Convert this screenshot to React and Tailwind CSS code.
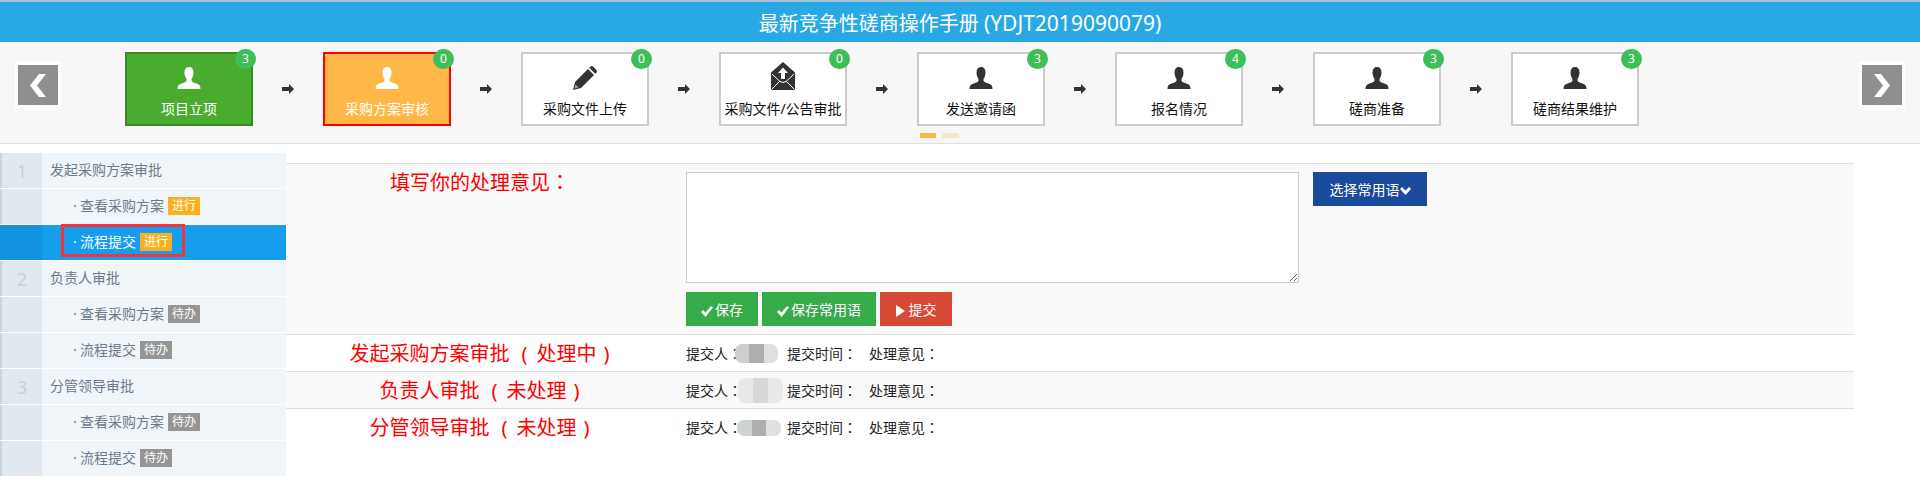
import React from "react";

const steps = [
  { name: "项目立项", count: 3, icon: "user", tone: "done" },
  { name: "采购方案审核", count: 0, icon: "user", tone: "active" },
  { name: "采购文件上传", count: 0, icon: "pencil" },
  { name: "采购文件/公告审批", count: 0, icon: "mail" },
  { name: "发送邀请函", count: 3, icon: "user" },
  { name: "报名情况", count: 4, icon: "user" },
  { name: "磋商准备", count: 3, icon: "user" },
  { name: "磋商结果维护", count: 3, icon: "user" },
];

const menu = [
  { no: 1, label: "发起采购方案审批" },
  { label: "查看采购方案", tag: "进行" },
  { label: "流程提交", tag: "进行", active: true },
  { no: 2, label: "负责人审批" },
  { label: "查看采购方案", tag: "待办" },
  { label: "流程提交", tag: "待办" },
  { no: 3, label: "分管领导审批" },
  { label: "查看采购方案", tag: "待办" },
  { label: "流程提交", tag: "待办" },
];

const records = [
  { title: "发起采购方案审批", status: "处理中", bg: "bg-white", blur: ["bg-[#ccd0d2]", "bg-[#b0aeac]", "bg-[#dfe0e4]"], size: "w-[43px] h-[19px] -ml-[7px] mr-[9px]" },
  { title: "负责人审批", status: "未处理", bg: "bg-[#f9f9f9]", blur: ["bg-[#e8e8e8]", "bg-[#d9d7d7]", "bg-[#e9e9eb]"], size: "w-[45px] h-[25px] -ml-[4px] mr-[4px]" },
  { title: "分管领导审批", status: "未处理", bg: "bg-white", blur: ["bg-[#ced2d3]", "bg-[#b0aeac]", "bg-[#dfe0e4]"], size: "w-[44px] h-[16px] -ml-[5px] mr-[6px]" },
];

const StepIcon = ({ type, className }) => {
  if (type === "pencil") {
    return (
      <svg width="24" height="24" viewBox="0 0 24 24" className={className}>
        <path fill="currentColor" d="M0 24 L2 16 L15 3 L21 9 L8 22 Z" />
        <path fill="#fff" d="M1.4 22.6 L2.5 18.5 L5.5 21.5 Z" opacity=".55" />
        <path fill="currentColor" d="M16.2 1.8 L17.6 .5 Q18.8 -.3 20 .6 L23.4 4 Q24.3 5.2 23.5 6.4 L22.2 7.8 Z" />
      </svg>
    );
  }
  if (type === "mail") {
    return (
      <svg width="24" height="28" viewBox="0 0 24 28" className={className}>
        <path fill="currentColor" d="M12 0 L24 10.5 V28 H0 V10.5 Z" />
        <path fill="#fff" d="M12 5.5 L17 11 H14 V17 H10 V11 H7 Z" />
        <path stroke="#fff" strokeWidth="1" fill="none" d="M1 12 L9 19.5 Q12 21.5 15 19.5 L23 12 M.5 27.5 L8.5 19.5 M23.5 27.5 L15.5 19.5" />
      </svg>
    );
  }
  return (
    <svg width="24" height="22" viewBox="0 0 24 22" className={`mb-px ${className}`}>
      <path fill="currentColor" d="M12 0 C9 0 7.5 2 7.5 5.5 C7.5 8.5 8.5 10.5 9.5 12 V13.5 C9.5 15 7 15.7 4 16.7 C1.5 17.6 .5 19 .5 22 H23.5 C23.5 19 22.5 17.6 20 16.7 C17 15.7 14.5 15 14.5 13.5 V12 C15.5 10.5 16.5 8.5 16.5 5.5 C16.5 2 15 0 12 0 Z" />
    </svg>
  );
};

const Arrow = () => (
  <svg width="12" height="10" viewBox="0 0 12 10" className="text-[#333]">
    <path fill="currentColor" d="M7 0 L12 5 L7 10 V7 H0 V3 H7 Z" />
  </svg>
);

const Check = () => (
  <svg width="12" height="12" viewBox="0 0 12 12" className="shrink-0 text-white mt-[3px]">
    <path fill="currentColor" d="M0 7 L2 5 L4.4 7.6 L10 1 L12 2.6 L4.6 12 Z" />
  </svg>
);

const NavButton = ({ dir }) => (
  <div className="w-[46px] h-[46px] border-[3px] border-white bg-[#8f8f8f] flex items-center justify-center">
    <svg width="16" height="23" viewBox="0 0 16 23" className="text-white">
      <path
        fill="currentColor"
        d={dir === "left" ? "M9 0 H16 L7 11.5 L16 23 H9 L0 11.5 Z" : "M7 0 H0 L9 11.5 L0 23 H7 L16 11.5 Z"}
      />
    </svg>
  </div>
);

const Step = ({ step }) => {
  const tones = {
    done: "bg-[#4aac2f] border-[#3b8a25] text-white",
    active: "bg-[#ffb848] border-[#ff0000] text-white",
  };
  return (
    <div className={`relative w-[128px] h-[74px] border-2 shrink-0 flex flex-col items-center ${tones[step.tone] || "bg-white border-[#ccc] text-[#111]"}`}>
      <div className="h-[36px] flex items-end">
        <StepIcon type={step.icon} className={step.tone ? "text-white" : "text-[#333]"} />
      </div>
      <div className="mt-[9px] text-[14px] leading-[20px] whitespace-nowrap">{step.name}</div>
      <span className="absolute -top-[5px] right-[-5px] w-[21px] h-[20px] rounded-full bg-[#3dbf57] text-white text-[12px] leading-[20px] text-center">
        {step.count}
      </span>
    </div>
  );
};

const MenuRow = ({ item }) => {
  const isHead = item.no !== undefined;
  return (
    <div className={`flex h-[35px] mb-px ${item.active ? "bg-[#159dee] text-white" : "bg-[#f0f5fa] text-[#6c7a89]"}`}>
      <div className={`w-[42px] border-l-2 flex items-center justify-center pt-[2px] text-[18px] shrink-0 ${item.active ? "bg-[#1393e2] border-[#1393e2]" : "bg-[#e1e8f0] border-[#c5d5e0] text-[#c3d1dc]"}`}>
        {item.no}
      </div>
      {isHead ? (
        <div className="pl-2 text-[14px] leading-[33px]">{item.label}</div>
      ) : (
        <div className="pl-[31px] pb-[2px] flex items-center text-[14px]">
          <span className="w-[7px]">·</span>
          <span>{item.label}</span>
          <span className={`ml-1 w-[32px] h-[18px] text-[12px] leading-[18px] text-center text-white ${item.tag === "进行" ? "bg-[#fdb01f]" : "bg-[#959595]"}`}>
            {item.tag}
          </span>
        </div>
      )}
    </div>
  );
};

const Btn = ({ className, children }) => (
  <button className={`h-[34px] flex items-center justify-center text-white text-[14px] ${className}`}>{children}</button>
);

// centred colon, as the SC face pushes it to the bottom left of its cell
const Colon = () => <span className="font-['Noto_Sans_CJK_TC',sans-serif]">：</span>;

export default function App() {
  return (
    <div className="w-[1920px] h-[491px] bg-white overflow-hidden font-['Noto_Sans','Noto_Sans_CJK_SC',sans-serif]">
      {/* Title */}
      <div className="h-[42px] border-t-2 border-[#a9c4d4] bg-[#29a9e3] text-white text-[20px] leading-[42px] text-center">
        最新竞争性磋商操作手册 <span className="text-[21px]">(YDJT2019090079)</span>
      </div>

      {/* Steps */}
      <div className="h-[102px] bg-[#f7f7f7] border-b border-[#e0e0e0]">
        <div className="flex items-start pt-[10px] pl-[15px] pr-[15px]">
          <div className="mt-[10px] mr-[64px]">
            <NavButton dir="left" />
          </div>
          {steps.map((step, i) => (
            <React.Fragment key={step.name}>
              <Step step={step} />
              {i < steps.length - 1 && (
                <div className="w-[70px] h-[74px] flex items-center justify-center shrink-0">
                  <Arrow />
                </div>
              )}
            </React.Fragment>
          ))}
          <div className="mt-[10px] ml-auto">
            <NavButton dir="right" />
          </div>
        </div>
        <div className="flex gap-[6px] pl-[920px] mt-[7px]">
          <span className="w-[16px] h-[5px] bg-[#ffb848]" />
          <span className="w-[17px] h-[5px] bg-[#f8e6cc]" />
        </div>
      </div>

      {/* Body */}
      <div className="flex items-start pt-[9px]">
        <div className="relative w-[286px] shrink-0">
          {menu.map((item, i) => (
            <MenuRow key={i} item={item} />
          ))}
          <div className="absolute left-[61px] top-[71px] w-[124px] h-[33px] border-[3px] border-[#f5333a]" />
        </div>

        <div className="w-[1568px] mt-[10px]">
          <div className="flex h-[172px] bg-[#f9f9f9] border-t border-b border-[#ddd]">
            <div className="w-[388px] text-center text-[20px] leading-[28px] text-[#ff0000] pt-[4px]">
              填写你的处理意见<Colon />
            </div>
            <div className="ml-[12px] pt-[8px]">
              <div className="flex items-start">
                <textarea className="w-[613px] h-[111px] border border-[#ccc] bg-white block" />
                <Btn className="ml-[14px] w-[114px] bg-[#1a4a9c]">
                  选择常用语
                  <svg width="11" height="8" viewBox="0 0 11 8" className="text-white mt-[3px]">
                    <path fill="currentColor" d="M0 2 L2 0 L5.5 3.5 L9 0 L11 2 L5.5 8 Z" />
                  </svg>
                </Btn>
              </div>
              <div className="flex gap-[4px] mt-[9px]">
                <Btn className="w-[72px] bg-[#37ab4a] gap-[2px]">
                  <Check />
                  保存
                </Btn>
                <Btn className="w-[114px] bg-[#37ab4a] gap-[2px]">
                  <Check />
                  保存常用语
                </Btn>
                <Btn className="w-[72px] bg-[#d84a38] gap-[4px]">
                  <svg width="9" height="12" viewBox="0 0 9 12" className="text-white mt-[3px]">
                    <path fill="currentColor" d="M0 0 L9 6 L0 12 Z" />
                  </svg>
                  提交
                </Btn>
              </div>
            </div>
          </div>

          {records.map((r) => (
            <div key={r.title} className={`flex items-center h-[37px] border-b border-[#ddd] last:border-b-0 ${r.bg}`}>
              <div className="w-[388px] flex justify-center text-[20px] leading-[28px] pt-px text-[#ff0000]">
                <span>{r.title}</span>
                <span className="w-[27px] pl-[12px]">(</span>
                <span>{r.status}</span>
                <span className="w-[14px] pl-[7px]">)</span>
              </div>
              <div className="ml-[12px] flex items-center text-[14px] text-[#222] whitespace-nowrap">
                <span>
                  提交人<Colon />
                </span>
                <span className={`flex rounded-[7px] overflow-hidden blur-[0.5px] ${r.size}`}>
                  <i className={`flex-1 ${r.blur[0]}`} />
                  <i className={`flex-1 ${r.blur[1]}`} />
                  <i className={`flex-1 ${r.blur[2]}`} />
                </span>
                <span className="w-[82px]">
                  提交时间<Colon />
                </span>
                <span>
                  处理意见<Colon />
                </span>
              </div>
            </div>
          ))}
        </div>
      </div>
    </div>
  );
}
